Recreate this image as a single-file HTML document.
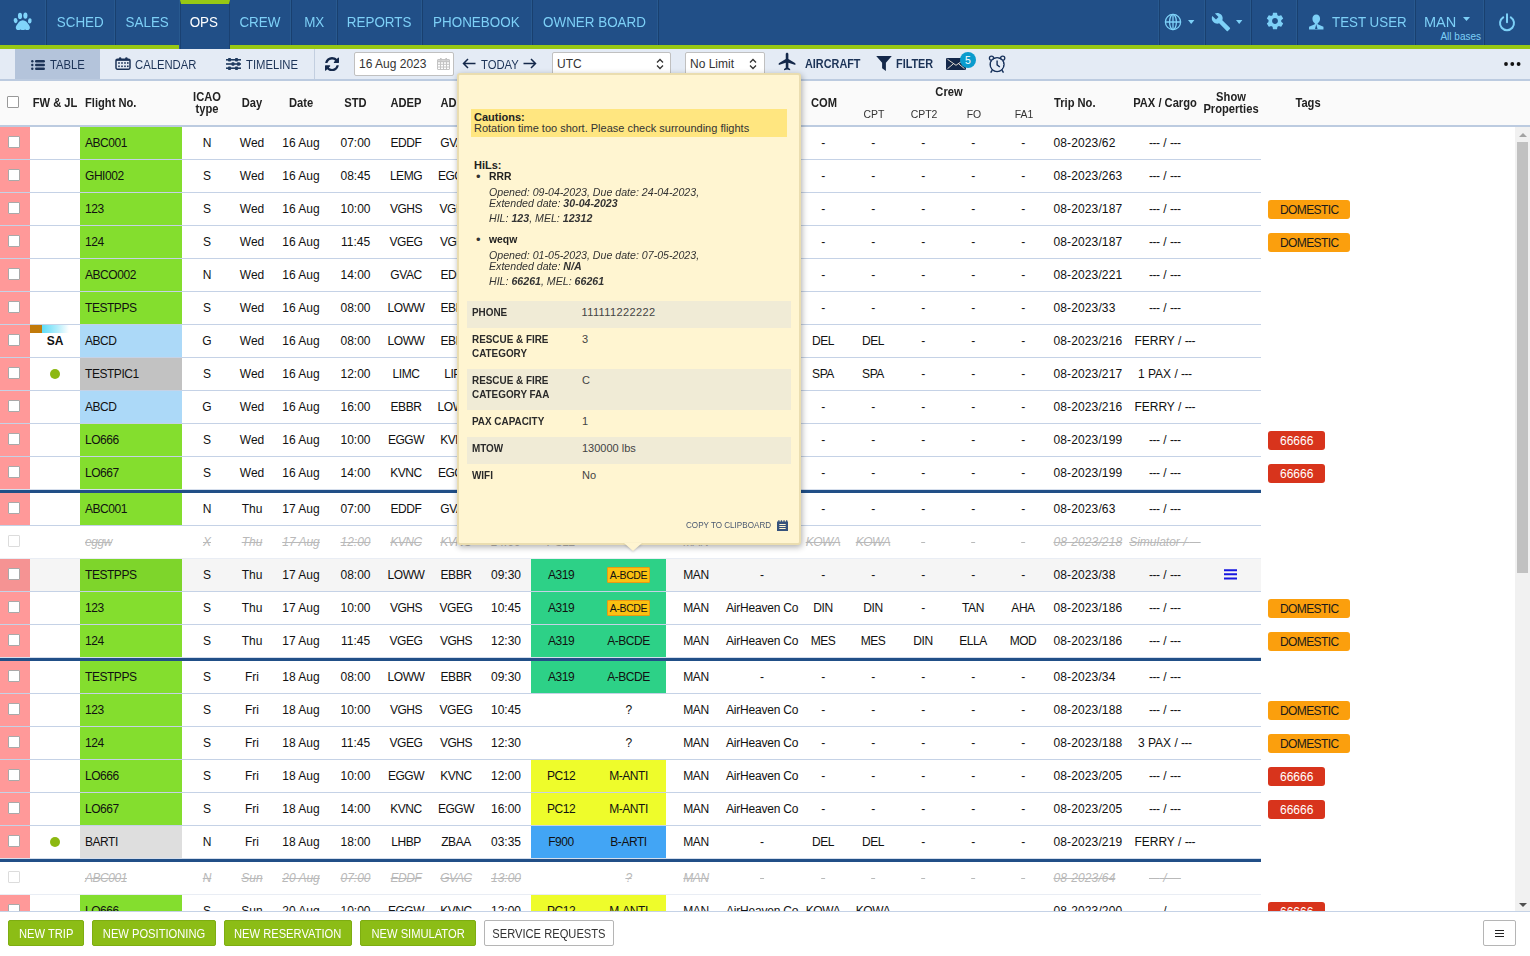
<!DOCTYPE html>
<html>
<head>
<meta charset="utf-8">
<title>OPS</title>
<style>
*{box-sizing:border-box;margin:0;padding:0}
html,body{width:1530px;height:956px;overflow:hidden;background:#fff}
body{font-family:"Liberation Sans",sans-serif;font-size:12px;color:#1a1a1a;position:relative}
i{font-style:normal}
/* ---------- NAV ---------- */
#nav{position:absolute;left:0;top:0;width:1530px;height:45px;background:#214f87}
#stripe{position:absolute;left:0;top:45px;width:1530px;height:4px;background:#97c814}
.ni{position:absolute;top:0;height:45px;border-left:1px solid #19406f;box-shadow:-1px 0 0 #28598f;color:#7dd0f7;font-size:15px;line-height:44px;text-align:center;white-space:nowrap}
.ni>b{display:inline-block;font-weight:normal;transform:scaleX(.895);transform-origin:50% 50%;position:relative;left:-.7px}
.ni.act{background:#214f87;height:49px;border-top:4px solid #97c814;color:#fff;line-height:36px;z-index:2;border-left:1px solid #1a4172;border-right:1px solid #1a4172}
/* ---------- TOOLBAR ---------- */
#tb{position:absolute;left:0;top:49px;width:1530px;height:32px;background:#e4ebf5;border-bottom:2px solid #bccbe0}
.tbi{position:absolute;top:0;height:30px;line-height:32.500px;font-size:12px;color:#1c3357;white-space:nowrap}
.tbi>span{display:inline-block;transform:scaleX(.94);transform-origin:0 50%}
.tbi svg{position:absolute}
.tbi.bb{line-height:31px}
.tbi.bb>span{transform:scaleX(.905)}
.inp{position:absolute;top:3px;height:24px;background:#fff;border:1px solid #c0c0c0;border-radius:2px;font-size:12px;line-height:22.500px;color:#333;padding-left:4px}
/* ---------- HEADER ---------- */
#th{position:absolute;left:0;top:81px;width:1530px;height:46px;background:#fafafa;border-bottom:2px solid #bccbe0}
.hc{position:absolute;font-weight:bold;font-size:12px;color:#222;white-space:nowrap;line-height:12px;text-align:center;transform:scaleX(.93);transform-origin:50% 50%}
.hc.hl{transform-origin:0 50%}
.hs{position:absolute;font-size:11px;color:#333;white-space:nowrap;text-align:center;line-height:12px;transform:scaleX(.95)}
/* ---------- BODY ---------- */
#tbody{position:absolute;left:0;top:127px;width:1515px;height:784px;overflow:hidden;background:#fff}
.r{position:absolute;left:0;width:1516px;height:33px}
.rb{position:absolute;left:0;top:0;width:1261px;height:33px;border-bottom:1px solid #c5d2e6}
.r.s .rb{height:36px;border-bottom:none}
.r.s .rb:after{content:"";position:absolute;left:0;top:32px;width:1261px;height:1px;background:#d5deec}
.r.s .rb:before{content:"";position:absolute;left:0;top:33px;width:1261px;height:3px;background:#214f87;z-index:3}
.r.h .rb{background:#f5f5f5}
.c{position:absolute;top:0;height:32px;line-height:32px;text-align:center;white-space:nowrap;font-size:12px;color:#111}
.c.l{text-align:left;padding-left:5px}
.c.u{letter-spacing:-.45px}
.c.t{padding-left:7px}
.r.x .c{color:#b9b9b9;font-style:italic;text-decoration:line-through}
.r.x .rb{border-bottom-color:#e9edf4}
.cb{display:inline-block;width:12px;height:12px;background:#fff;border:1px solid #a9a9a9;border-radius:1px;vertical-align:middle;position:relative;top:-2px;left:-1px}
.r.x .cb{border-color:#dcdcdc}
.dot{display:inline-block;width:10px;height:10px;border-radius:50%;background:#8cb811;;vertical-align:middle;position:relative;top:-1px}
.sa{font-size:12px;color:#111}
.fl1{position:absolute;left:0;top:0;width:12px;height:8px;background:#c17a0a}
.fl2{position:absolute;left:12px;top:0;width:27px;height:8px;background:linear-gradient(90deg,#5ddcf7,#b8eefb 60%,#fff)}
.bdg{display:inline-block;background:#fbc111;border:1px solid #e99a12;line-height:14px;height:16px;padding:0 2px;font-size:10.500px;letter-spacing:-.4px;border-radius:1px;vertical-align:middle;position:relative;top:-1px}
.tag{display:inline-block;height:19px;line-height:20px;border-radius:3px;font-size:12px;padding:0 12px;vertical-align:middle;position:relative;top:0px}
.tag.dom{background:#fb9f0d;color:#1a1a1a;letter-spacing:-.6px;padding-right:11px}
.tag.red{background:#d8341c;color:#fff}
.em{letter-spacing:-.5px;margin-right:.5px}
/* ---------- SCROLLBAR ---------- */
#sb{position:absolute;left:1515px;top:127px;width:15px;height:784px;background:#f1f1f1}
#sb .thumb{position:absolute;left:2px;top:15px;width:11px;height:431px;background:#c1c1c1}
/* ---------- FOOTER ---------- */
#ft{position:absolute;left:0;top:911px;width:1530px;height:45px;background:#fff;border-top:1px solid #c5d2e6}
.btn{position:absolute;top:8px;height:26px;line-height:26px;text-align:center;font-size:12px;color:#fff;background:#8cbd16;border:1px solid #7ead12;border-radius:2px;white-space:nowrap}
.btn>b{display:inline-block;font-weight:normal;transform:scaleX(.93);transform-origin:50% 50%}
.btn.w{background:#fff;color:#333;border:1px solid #b5b5b5}
/* ---------- TOOLTIP ---------- */
#tip{position:absolute;left:457px;top:73px;width:344px;height:471.5px;background:#fff5d1;box-shadow:1px 2px 6px rgba(0,0,0,.32);z-index:10;border:2px solid #eaddb0;border-radius:3px}
#tip .arrow{position:absolute;left:165px;top:468px;width:0;height:0;border-left:9.5px solid transparent;border-right:9.5px solid transparent;border-top:8px solid #fff5d1;filter:drop-shadow(0 1px 1px rgba(0,0,0,.18))}
#tip .t{position:absolute;white-space:nowrap;font-size:11px;color:#333;line-height:12px}
#tip .tr{position:absolute;left:8px;width:324px}
#tip .tr.a{background:#f0ebd6}
#tip .tl{position:absolute;left:5px;font-weight:bold;font-size:11px;color:#2a2a2a;line-height:14px;top:4px;transform:scaleX(.9);transform-origin:0 50%;white-space:nowrap}
#tip .tv{position:absolute;left:115px;font-size:11px;color:#444;line-height:14px;top:4px}
</style>
</head>
<body>

<!-- NAV -->
<div id="nav">
  <div class="ni" style="left:0;width:46px;border-left:none">
    <svg width="46" height="45" viewBox="0 0 46 45" style="position:absolute;left:0;top:0"><g fill="#80d4fa"><ellipse cx="15.600" cy="20.600" rx="1.900" ry="2.700" transform="rotate(-8 15.600 20.600)"/><ellipse cx="20" cy="15.900" rx="2.050" ry="3.150"/><ellipse cx="25.400" cy="15.600" rx="2.050" ry="3.200"/><ellipse cx="29.800" cy="20.900" rx="1.800" ry="2.600" transform="rotate(8 29.800 20.900)"/><path d="M22.800 20.200C20 20.200 18.500 22.500 17.500 24 16.300 25.500 15.800 26.500 15.800 27.800 15.800 29.300 17 30.100 18.200 30.100 19.300 30.100 19.800 29.600 20.500 29.400 21.300 29.600 21.800 30.100 22.800 30.100 23.800 30.100 24.300 29.600 25.100 29.400 25.900 29.600 26.400 30.100 27.500 30.100 28.700 30.100 29.900 29.300 29.900 27.800 29.900 26.500 29.400 25.500 28.200 24 27.200 22.500 25.600 20.200 22.800 20.200z"/></g></svg>
  </div>
  <div class="ni" style="left:46px;width:69px"><b>SCHED</b></div>
  <div class="ni" style="left:115px;width:65px"><b>SALES</b></div>
  <div class="ni act" style="left:180px;width:50px"><b>OPS</b></div>
  <div class="ni" style="left:230px;width:61px;border-left:none"><b>CREW</b></div>
  <div class="ni" style="left:291px;width:46px"><b>MX</b></div>
  <div class="ni" style="left:337px;width:85px"><b>REPORTS</b></div>
  <div class="ni" style="left:422px;width:110px"><b>PHONEBOOK</b></div>
  <div class="ni" style="left:532px;width:126px"><b>OWNER BOARD</b></div>
  <div class="ni" style="left:658px;width:1px"></div>

  <div class="ni" style="left:1159px;width:46px">
    <svg width="18" height="18" viewBox="0 0 18 18" style="position:absolute;left:3.700px;top:13.200px"><g fill="none" stroke="#7dd0f7" stroke-width="1.3"><circle cx="9" cy="9" r="7.6"/><ellipse cx="9" cy="9" rx="3.4" ry="7.6"/><path d="M1.400 9h15.200M9 1.400v15.200"/></g></svg>
    <svg width="8" height="5" viewBox="0 0 8 5" style="position:absolute;left:28px;top:20px"><path d="M0 0h6.400L3.200 4z" fill="#7dd0f7"/></svg>
  </div>
  <div class="ni" style="left:1205px;width:46px">
    <svg width="20" height="20" viewBox="0 0 24 24" style="position:absolute;left:5px;top:12px"><path fill="#7dd0f7" d="M22.700 19l-9.100-9.100c.9-2.300.4-5-1.500-6.900-2-2-5-2.400-7.400-1.300L9 6 6 9 1.600 4.700C.4 7.100.9 10.100 2.900 12.100c1.900 1.900 4.600 2.400 6.900 1.500l9.100 9.100c.4.4 1 .4 1.400 0l2.300-2.300c.5-.4.500-1.100.1-1.400z"/></svg>
    <svg width="8" height="5" viewBox="0 0 8 5" style="position:absolute;left:30px;top:20px"><path d="M0 0h6.400L3.200 4z" fill="#7dd0f7"/></svg>
  </div>
  <div class="ni" style="left:1251px;width:46px">
    <svg width="20" height="20" viewBox="0 0 24 24" style="position:absolute;left:12.500px;top:11.300px"><path fill="#7dd0f7" d="M19.430 12.980c.04-.32.070-.64.070-.98s-.03-.66-.07-.98l2.110-1.650c.19-.15.240-.42.120-.64l-2-3.460c-.12-.22-.39-.3-.61-.22l-2.490 1c-.52-.4-1.080-.73-1.690-.98l-.38-2.650A.488.488 0 0 0 14 2h-4c-.25 0-.46.180-.49.420l-.38 2.650c-.61.250-1.170.59-1.690.98l-2.490-1c-.23-.09-.49 0-.61.220l-2 3.460c-.13.220-.07.490.12.640l2.110 1.650c-.4.320-.7.650-.7.980s.3.660.7.980l-2.110 1.650c-.19.150-.24.420-.12.640l2 3.460c.12.220.39.300.61.220l2.490-1c.52.400 1.080.73 1.690.98l.38 2.650c.3.240.24.420.49.420h4c.25 0 .46-.18.490-.42l.38-2.650c.61-.25 1.170-.59 1.690-.98l2.490 1c.23.090.49 0 .61-.22l2-3.460c.12-.22.070-.49-.12-.64l-2.110-1.650zM12 15.500c-1.930 0-3.500-1.570-3.500-3.500s1.570-3.500 3.500-3.500 3.500 1.570 3.500 3.500-1.570 3.500-3.500 3.500z"/></svg>
  </div>
  <div class="ni" style="left:1297px;width:118px">
    <svg width="16.500" height="16" viewBox="0 0 16 16" preserveAspectRatio="none" style="position:absolute;left:10px;top:14.300px"><path fill="#7dd0f7" d="M8 .5c2.300 0 3.700 1.700 3.700 4.200 0 2-1 3.900-2.300 4.600v.9l5.600 2.600v2.700H1v-2.700l5.600-2.600v-.9C5.300 8.600 4.300 6.700 4.300 4.700 4.300 2.200 5.700.5 8 .5z"/><path fill="#214f87" d="M8 10.200l1.200 4.800H6.800z"/></svg>
    <span style="position:absolute;left:33.500px;top:0;transform:scaleX(.89);transform-origin:0 50%">TEST USER</span>
  </div>
  <div class="ni" style="left:1415px;width:69px">
    <span style="position:absolute;left:7.500px;top:0;transform:scaleX(.97);transform-origin:0 50%">MAN</span>
    <svg width="8" height="5" viewBox="0 0 8 5" style="position:absolute;left:47px;top:17px"><path d="M0 0h7L3.500 4z" fill="#7dd0f7"/></svg>
    <span style="position:absolute;right:3px;top:31px;font-size:10px;line-height:12px">All bases</span>
  </div>
  <div class="ni" style="left:1484px;width:46px">
    <svg width="18" height="19" viewBox="0 0 18 19" style="position:absolute;left:13px;top:13px"><g fill="none" stroke="#7dd0f7" stroke-width="2" stroke-linecap="round"><path d="M5.200 4.300A7 7 0 1 0 12.800 4.300"/><path d="M9 1.200v8"/></g></svg>
  </div>
</div>
<div id="stripe"></div>

<!-- TOOLBAR -->
<div id="tb">
  <div class="tbi" style="left:15px;width:85px;background:#b4c4db"></div>
  <div class="tbi" style="left:31px">
    <svg width="14" height="10" viewBox="0 0 14 10" style="left:-.5px;top:10.700px"><g fill="#1c3357"><circle cx="1.300" cy="1.300" r="1.200"/><circle cx="1.300" cy="5" r="1.200"/><circle cx="1.300" cy="8.700" r="1.200"/><rect x="4" y=".1" width="10" height="2.400" rx="1.200"/><rect x="4" y="3.800" width="10" height="2.400" rx="1.200"/><rect x="4" y="7.500" width="10" height="2.400" rx="1.200"/></g></svg>
    <span style="margin-left:19px">TABLE</span>
  </div>
  <div class="tbi" style="left:115px">
    <svg width="16" height="13" viewBox="0 0 16 13" style="left:-.5px;top:7.700px"><rect x="1" y="2.200" width="14" height="10" rx="1.400" fill="none" stroke="#1c3357" stroke-width="1.500"/><path d="M1 3h14" stroke="#1c3357" stroke-width="1.800"/><g fill="#1c3357"><circle cx="5.100" cy="1.400" r="1.250"/><circle cx="11.400" cy="1.400" r="1.250"/><rect x="3.200" y="5.200" width="1.600" height="1.600"/><rect x="6.200" y="5.200" width="1.600" height="1.600"/><rect x="9.200" y="5.200" width="1.600" height="1.600"/><rect x="12" y="5.200" width="1.600" height="1.600"/><rect x="3.200" y="8.500" width="1.600" height="1.600"/><rect x="6.200" y="8.500" width="1.600" height="1.600"/><rect x="9.200" y="8.500" width="1.600" height="1.600"/><rect x="12" y="8.500" width="1.600" height="1.600"/></g></svg>
    <span style="margin-left:20px">CALENDAR</span>
  </div>
  <div class="tbi" style="left:226px">
    <svg width="15" height="12" viewBox="0 0 15 12" style="left:0;top:9px"><g fill="#1f3a5f"><rect x="0" y="1" width="15" height="1.600"/><rect x="0" y="5.200" width="15" height="1.600"/><rect x="0" y="9.400" width="15" height="1.600"/><rect x="2" y="0" width="3" height="3.600" rx=".8"/><rect x="9" y="0" width="3" height="3.600" rx=".8"/><rect x="5.500" y="4.200" width="3" height="3.600" rx=".8"/><rect x="11" y="4.200" width="3" height="3.600" rx=".8"/><rect x="2" y="8.400" width="3" height="3.600" rx=".8"/><rect x="9" y="8.400" width="3" height="3.600" rx=".8"/></g></svg>
    <span style="margin-left:20px">TIMELINE</span>
  </div>
  <div style="position:absolute;left:314px;top:0;width:1px;height:30px;background:#c3cfe0"></div>
  <div class="tbi" style="left:324px">
    <svg width="14" height="14.300" viewBox="0 0 1536 1536" preserveAspectRatio="none" style="left:.7px;top:7.700px"><path fill="#14284a" d="M1511 928q0 5-1 7-64 268-268 434.500T764 1536q-146 0-282.500-55T238 1324l-129 129q-19 19-45 19t-45-19-19-45V960q0-26 19-45t45-19h448q26 0 45 19t19 45-19 45l-137 137q71 66 161 102t187 36q134 0 250-65t186-179q11-17 53-117 8-23 30-23h192q13 0 22.500 9.500t9.500 22.500zm25-800v448q0 26-19 45t-45 19h-448q-26 0-45-19t-19-45 19-45l138-138Q969 256 768 256q-134 0-250 65T332 500q-11 17-53 117-8 23-30 23H50q-13 0-22.500-9.500T18 608v-7q65-268 270-434.500T768 0q146 0 284 55.500T1297 212l130-129q19-19 45-19t45 19 19 45z"/></svg>
  </div>
  <div class="inp" style="left:354px;width:100px">16 Aug 2023
    <svg width="13" height="12" viewBox="0 0 13 12" style="position:absolute;left:81.500px;top:5.300px"><g fill="none" stroke="#c4c4c4" stroke-width="1"><rect x=".5" y="1.500" width="12" height="10" rx=".5"/><path d="M.5 3.300h12" stroke-width="2"/><path d="M3.800 0v2.500M9.200 0v2.500" stroke-width="1.600"/><path d="M.5 6.300h12M.5 9h12M3.500 4v7.500M6.500 4v7.500M9.500 4v7.500"/></g></svg>
  </div>
  <div class="tbi" style="left:462px">
    <svg width="14" height="11" viewBox="0 0 14 11" style="left:0;top:9px"><path d="M13.500 5.500H1.500M6 1L1.500 5.500 6 10" fill="none" stroke="#14284a" stroke-width="1.500"/></svg>
    <span style="margin-left:19px">TODAY</span>
    <svg width="14" height="11" viewBox="0 0 14 11" style="left:61px;top:9px"><path d="M.5 5.500h12M8 1l4.500 4.500L8 10" fill="none" stroke="#14284a" stroke-width="1.500"/></svg>
  </div>
  <div class="inp" style="left:552px;width:119px">UTC
    <svg width="8" height="12" viewBox="0 0 8 12" style="position:absolute;left:103px;top:5px"><path d="M1 4.500L4 1.500 7 4.500M1 7.500L4 10.500 7 7.500" fill="none" stroke="#333" stroke-width="1.300"/></svg>
  </div>
  <div class="inp" style="left:685px;width:80px">No Limit
    <svg width="8" height="12" viewBox="0 0 8 12" style="position:absolute;left:63px;top:5px"><path d="M1 4.500L4 1.500 7 4.500M1 7.500L4 10.500 7 7.500" fill="none" stroke="#333" stroke-width="1.300"/></svg>
  </div>
  <div class="tbi bb" style="left:778px;font-weight:bold">
    <svg width="21" height="21" viewBox="0 0 24 24" style="left:-1.500px;top:2.400px"><path fill="#14284a" d="M21 16v-2l-8-5V3.500c0-.83-.67-1.500-1.500-1.500S10 2.670 10 3.500V9l-8 5v2l8-2.500V19l-2 1.500V22l3.500-1 3.500 1v-1.500L13 19v-5.500l8 2.500z"/></svg>
    <span style="margin-left:27px">AIRCRAFT</span>
  </div>
  <div class="tbi bb" style="left:876px;font-weight:bold">
    <svg width="16" height="15" viewBox="0 0 16 15" style="left:0;top:7px"><path fill="#14284a" d="M.2 0h15.600L9.900 6.800V15L6.100 12.300V6.800z"/></svg>
    <span style="margin-left:20px">FILTER</span>
  </div>
  <div class="tbi" style="left:946px">
    <svg width="20" height="12" viewBox="0 0 20 12" style="left:0;top:9.300px"><rect x="0" y="0" width="20" height="12" rx="1.300" fill="#14284a"/><path d="M1.500 1.300L10 7.300l8.500-6M1.500 10.700L7.500 5.700M18.500 10.700L12.500 5.700" fill="none" stroke="#efe9dc" stroke-width=".9"/></svg>
    <span style="position:absolute;left:14px;top:3px;width:16px;height:16px;border-radius:50%;background:#0a9bcd;color:#fff;font-size:10.500px;line-height:16px;text-align:center;transform:none">5</span>
  </div>
  <div class="tbi" style="left:988px">
    <svg width="18" height="19" viewBox="0 0 18 19" style="left:0;top:6px"><g fill="none" stroke="#16305a" stroke-width="1.500"><circle cx="9.100" cy="9.600" r="6.900"/><path d="M9.100 5.400v4.500l2.700 2.100" stroke-width="1.400"/><circle cx="3.500" cy="3.300" r="2.100" stroke-width="1.300"/><circle cx="14.700" cy="3.300" r="2.100" stroke-width="1.300"/><path d="M4.300 15.200L2.700 17.600M13.900 15.200l1.600 2.400" stroke-width="1.500"/></g><circle cx="9.100" cy="9.600" r="6.150" fill="#e4ebf5"/><path d="M9.100 5.400v4.500l2.700 2.100" stroke="#16305a" stroke-width="1.400" fill="none"/></svg>
  </div>
  <div class="tbi" style="left:1504px">
    <svg width="17" height="4" viewBox="0 0 17 4" style="left:0;top:13px"><g fill="#111"><circle cx="2" cy="2" r="1.900"/><circle cx="8.300" cy="2" r="1.900"/><circle cx="14.600" cy="2" r="1.900"/></g></svg>
  </div>
</div>

<!-- HEADER -->
<div id="th">
  <i class="cb" style="position:absolute;left:7px;top:15px;border-color:#999"></i>
  <div class="hc" style="left:30px;width:50px;top:15.500px">FW &amp; JL</div>
  <div class="hc hl" style="left:85px;top:15.500px;text-align:left">Flight No.</div>
  <div class="hc" style="left:182px;width:50px;top:9.500px">ICAO<br>type</div>
  <div class="hc" style="left:232px;width:40px;top:15.500px">Day</div>
  <div class="hc" style="left:272px;width:58px;top:15.500px">Date</div>
  <div class="hc" style="left:330px;width:51px;top:15.500px">STD</div>
  <div class="hc" style="left:381px;width:50px;top:15.500px">ADEP</div>
  <div class="hc" style="left:431px;width:50px;top:15.500px">ADES</div>
  <div class="hc" style="left:799px;width:50px;top:15.500px">COM</div>
  <div class="hc" style="left:849px;width:200px;top:5px">Crew</div>
  <div class="hs" style="left:849px;width:50px;top:27px">CPT</div>
  <div class="hs" style="left:899px;width:50px;top:27px">CPT2</div>
  <div class="hs" style="left:949px;width:50px;top:27px">FO</div>
  <div class="hs" style="left:999px;width:50px;top:27px">FA1</div>
  <div class="hc hl" style="left:1054px;top:15.500px;text-align:left">Trip No.</div>
  <div class="hc" style="left:1128px;width:74px;top:15.500px">PAX / Cargo</div>
  <div class="hc" style="left:1196px;width:70px;top:9.500px">Show<br>Properties</div>
  <div class="hc" style="left:1268px;width:80px;top:15.500px">Tags</div>
</div>

<!-- TABLE BODY -->
<div id="tbody">
<div class="r" style="top:0px"><div class="rb"><div class="c " style="left:0px;width:30px;background:#ff9999;"><i class="cb"></i></div><div class="c " style="left:30px;width:50px;"></div><div class="c l u" style="left:80px;width:102px;background:#84de2e;">ABC001</div><div class="c " style="left:182px;width:50px;">N</div><div class="c " style="left:232px;width:40px;">Wed</div><div class="c " style="left:272px;width:58px;">16 Aug</div><div class="c " style="left:330px;width:51px;">07:00</div><div class="c u" style="left:381px;width:50px;">EDDF</div><div class="c u" style="left:431px;width:50px;">GVAC</div><div class="c " style="left:481px;width:50px;">13:00</div><div class="c u" style="left:531px;width:60px;"></div><div class="c u" style="left:591px;width:75px;">?</div><div class="c u" style="left:666px;width:60px;">MAN</div><div class="c " style="left:726px;width:72px;letter-spacing:-.2px">-</div><div class="c u" style="left:798px;width:50px;">-</div><div class="c u" style="left:848px;width:50px;">-</div><div class="c u" style="left:898px;width:50px;">-</div><div class="c u" style="left:948px;width:50px;">-</div><div class="c u" style="left:998px;width:50px;">-</div><div class="c l" style="left:1048px;width:80px;padding-left:5.5px;letter-spacing:.12px">08-2023/62</div><div class="c " style="left:1128px;width:74px;"><span class="em">---</span> / <span class="em">---</span></div><div class="c " style="left:1202px;width:59px;"></div></div><div class="c l t" style="left:1261px;width:255px;"></div></div>
<div class="r" style="top:33px"><div class="rb"><div class="c " style="left:0px;width:30px;background:#ff9999;"><i class="cb"></i></div><div class="c " style="left:30px;width:50px;"></div><div class="c l u" style="left:80px;width:102px;background:#84de2e;">GHI002</div><div class="c " style="left:182px;width:50px;">S</div><div class="c " style="left:232px;width:40px;">Wed</div><div class="c " style="left:272px;width:58px;">16 Aug</div><div class="c " style="left:330px;width:51px;">08:45</div><div class="c u" style="left:381px;width:50px;">LEMG</div><div class="c u" style="left:431px;width:50px;">EGGW</div><div class="c " style="left:481px;width:50px;">11:00</div><div class="c u" style="left:531px;width:60px;"></div><div class="c u" style="left:591px;width:75px;">?</div><div class="c u" style="left:666px;width:60px;">MAN</div><div class="c " style="left:726px;width:72px;letter-spacing:-.2px">-</div><div class="c u" style="left:798px;width:50px;">-</div><div class="c u" style="left:848px;width:50px;">-</div><div class="c u" style="left:898px;width:50px;">-</div><div class="c u" style="left:948px;width:50px;">-</div><div class="c u" style="left:998px;width:50px;">-</div><div class="c l" style="left:1048px;width:80px;padding-left:5.5px;letter-spacing:.12px">08-2023/263</div><div class="c " style="left:1128px;width:74px;"><span class="em">---</span> / <span class="em">---</span></div><div class="c " style="left:1202px;width:59px;"></div></div><div class="c l t" style="left:1261px;width:255px;"></div></div>
<div class="r" style="top:66px"><div class="rb"><div class="c " style="left:0px;width:30px;background:#ff9999;"><i class="cb"></i></div><div class="c " style="left:30px;width:50px;"></div><div class="c l u" style="left:80px;width:102px;background:#84de2e;">123</div><div class="c " style="left:182px;width:50px;">S</div><div class="c " style="left:232px;width:40px;">Wed</div><div class="c " style="left:272px;width:58px;">16 Aug</div><div class="c " style="left:330px;width:51px;">10:00</div><div class="c u" style="left:381px;width:50px;">VGHS</div><div class="c u" style="left:431px;width:50px;">VGEG</div><div class="c " style="left:481px;width:50px;">10:45</div><div class="c u" style="left:531px;width:60px;"></div><div class="c u" style="left:591px;width:75px;">?</div><div class="c u" style="left:666px;width:60px;">MAN</div><div class="c " style="left:726px;width:72px;letter-spacing:-.2px">-</div><div class="c u" style="left:798px;width:50px;">-</div><div class="c u" style="left:848px;width:50px;">-</div><div class="c u" style="left:898px;width:50px;">-</div><div class="c u" style="left:948px;width:50px;">-</div><div class="c u" style="left:998px;width:50px;">-</div><div class="c l" style="left:1048px;width:80px;padding-left:5.5px;letter-spacing:.12px">08-2023/187</div><div class="c " style="left:1128px;width:74px;"><span class="em">---</span> / <span class="em">---</span></div><div class="c " style="left:1202px;width:59px;"></div></div><div class="c l t" style="left:1261px;width:255px;"><span class="tag dom">DOMESTIC</span></div></div>
<div class="r" style="top:99px"><div class="rb"><div class="c " style="left:0px;width:30px;background:#ff9999;"><i class="cb"></i></div><div class="c " style="left:30px;width:50px;"></div><div class="c l u" style="left:80px;width:102px;background:#84de2e;">124</div><div class="c " style="left:182px;width:50px;">S</div><div class="c " style="left:232px;width:40px;">Wed</div><div class="c " style="left:272px;width:58px;">16 Aug</div><div class="c " style="left:330px;width:51px;">11:45</div><div class="c u" style="left:381px;width:50px;">VGEG</div><div class="c u" style="left:431px;width:50px;">VGHS</div><div class="c " style="left:481px;width:50px;">12:30</div><div class="c u" style="left:531px;width:60px;"></div><div class="c u" style="left:591px;width:75px;">?</div><div class="c u" style="left:666px;width:60px;">MAN</div><div class="c " style="left:726px;width:72px;letter-spacing:-.2px">-</div><div class="c u" style="left:798px;width:50px;">-</div><div class="c u" style="left:848px;width:50px;">-</div><div class="c u" style="left:898px;width:50px;">-</div><div class="c u" style="left:948px;width:50px;">-</div><div class="c u" style="left:998px;width:50px;">-</div><div class="c l" style="left:1048px;width:80px;padding-left:5.5px;letter-spacing:.12px">08-2023/187</div><div class="c " style="left:1128px;width:74px;"><span class="em">---</span> / <span class="em">---</span></div><div class="c " style="left:1202px;width:59px;"></div></div><div class="c l t" style="left:1261px;width:255px;"><span class="tag dom">DOMESTIC</span></div></div>
<div class="r" style="top:132px"><div class="rb"><div class="c " style="left:0px;width:30px;background:#ff9999;"><i class="cb"></i></div><div class="c " style="left:30px;width:50px;"></div><div class="c l u" style="left:80px;width:102px;background:#84de2e;">ABCO002</div><div class="c " style="left:182px;width:50px;">N</div><div class="c " style="left:232px;width:40px;">Wed</div><div class="c " style="left:272px;width:58px;">16 Aug</div><div class="c " style="left:330px;width:51px;">14:00</div><div class="c u" style="left:381px;width:50px;">GVAC</div><div class="c u" style="left:431px;width:50px;">EDDF</div><div class="c " style="left:481px;width:50px;">20:00</div><div class="c u" style="left:531px;width:60px;"></div><div class="c u" style="left:591px;width:75px;">?</div><div class="c u" style="left:666px;width:60px;">MAN</div><div class="c " style="left:726px;width:72px;letter-spacing:-.2px">-</div><div class="c u" style="left:798px;width:50px;">-</div><div class="c u" style="left:848px;width:50px;">-</div><div class="c u" style="left:898px;width:50px;">-</div><div class="c u" style="left:948px;width:50px;">-</div><div class="c u" style="left:998px;width:50px;">-</div><div class="c l" style="left:1048px;width:80px;padding-left:5.5px;letter-spacing:.12px">08-2023/221</div><div class="c " style="left:1128px;width:74px;"><span class="em">---</span> / <span class="em">---</span></div><div class="c " style="left:1202px;width:59px;"></div></div><div class="c l t" style="left:1261px;width:255px;"></div></div>
<div class="r" style="top:165px"><div class="rb"><div class="c " style="left:0px;width:30px;background:#ff9999;"><i class="cb"></i></div><div class="c " style="left:30px;width:50px;"></div><div class="c l u" style="left:80px;width:102px;background:#84de2e;">TESTPPS</div><div class="c " style="left:182px;width:50px;">S</div><div class="c " style="left:232px;width:40px;">Wed</div><div class="c " style="left:272px;width:58px;">16 Aug</div><div class="c " style="left:330px;width:51px;">08:00</div><div class="c u" style="left:381px;width:50px;">LOWW</div><div class="c u" style="left:431px;width:50px;">EBBR</div><div class="c " style="left:481px;width:50px;">09:30</div><div class="c u" style="left:531px;width:60px;"></div><div class="c u" style="left:591px;width:75px;">?</div><div class="c u" style="left:666px;width:60px;">MAN</div><div class="c " style="left:726px;width:72px;letter-spacing:-.2px">-</div><div class="c u" style="left:798px;width:50px;">-</div><div class="c u" style="left:848px;width:50px;">-</div><div class="c u" style="left:898px;width:50px;">-</div><div class="c u" style="left:948px;width:50px;">-</div><div class="c u" style="left:998px;width:50px;">-</div><div class="c l" style="left:1048px;width:80px;padding-left:5.5px;letter-spacing:.12px">08-2023/33</div><div class="c " style="left:1128px;width:74px;"><span class="em">---</span> / <span class="em">---</span></div><div class="c " style="left:1202px;width:59px;"></div></div><div class="c l t" style="left:1261px;width:255px;"></div></div>
<div class="r" style="top:198px"><div class="rb"><div class="c " style="left:0px;width:30px;background:#ff9999;"><i class="cb"></i></div><div class="c " style="left:30px;width:50px;"><span class="fl1"></span><span class="fl2"></span><b class="sa">SA</b></div><div class="c l u" style="left:80px;width:102px;background:#acd9f8;">ABCD</div><div class="c " style="left:182px;width:50px;">G</div><div class="c " style="left:232px;width:40px;">Wed</div><div class="c " style="left:272px;width:58px;">16 Aug</div><div class="c " style="left:330px;width:51px;">08:00</div><div class="c u" style="left:381px;width:50px;">LOWW</div><div class="c u" style="left:431px;width:50px;">EBBR</div><div class="c " style="left:481px;width:50px;">09:30</div><div class="c u" style="left:531px;width:60px;"></div><div class="c u" style="left:591px;width:75px;">?</div><div class="c u" style="left:666px;width:60px;">MAN</div><div class="c " style="left:726px;width:72px;letter-spacing:-.2px">-</div><div class="c u" style="left:798px;width:50px;">DEL</div><div class="c u" style="left:848px;width:50px;">DEL</div><div class="c u" style="left:898px;width:50px;">-</div><div class="c u" style="left:948px;width:50px;">-</div><div class="c u" style="left:998px;width:50px;">-</div><div class="c l" style="left:1048px;width:80px;padding-left:5.5px;letter-spacing:.12px">08-2023/216</div><div class="c " style="left:1128px;width:74px;">FERRY / <span class="em">---</span></div><div class="c " style="left:1202px;width:59px;"></div></div><div class="c l t" style="left:1261px;width:255px;"></div></div>
<div class="r" style="top:231px"><div class="rb"><div class="c " style="left:0px;width:30px;background:#ff9999;"><i class="cb"></i></div><div class="c " style="left:30px;width:50px;"><i class="dot"></i></div><div class="c l u" style="left:80px;width:102px;background:#c2c2c2;">TESTPIC1</div><div class="c " style="left:182px;width:50px;">S</div><div class="c " style="left:232px;width:40px;">Wed</div><div class="c " style="left:272px;width:58px;">16 Aug</div><div class="c " style="left:330px;width:51px;">12:00</div><div class="c u" style="left:381px;width:50px;">LIMC</div><div class="c u" style="left:431px;width:50px;">LIPZ</div><div class="c " style="left:481px;width:50px;">13:00</div><div class="c u" style="left:531px;width:60px;"></div><div class="c u" style="left:591px;width:75px;">?</div><div class="c u" style="left:666px;width:60px;">MAN</div><div class="c " style="left:726px;width:72px;letter-spacing:-.2px">-</div><div class="c u" style="left:798px;width:50px;">SPA</div><div class="c u" style="left:848px;width:50px;">SPA</div><div class="c u" style="left:898px;width:50px;">-</div><div class="c u" style="left:948px;width:50px;">-</div><div class="c u" style="left:998px;width:50px;">-</div><div class="c l" style="left:1048px;width:80px;padding-left:5.5px;letter-spacing:.12px">08-2023/217</div><div class="c " style="left:1128px;width:74px;">1 PAX / <span class="em">---</span></div><div class="c " style="left:1202px;width:59px;"></div></div><div class="c l t" style="left:1261px;width:255px;"></div></div>
<div class="r" style="top:264px"><div class="rb"><div class="c " style="left:0px;width:30px;background:#ff9999;"><i class="cb"></i></div><div class="c " style="left:30px;width:50px;"></div><div class="c l u" style="left:80px;width:102px;background:#acd9f8;">ABCD</div><div class="c " style="left:182px;width:50px;">G</div><div class="c " style="left:232px;width:40px;">Wed</div><div class="c " style="left:272px;width:58px;">16 Aug</div><div class="c " style="left:330px;width:51px;">16:00</div><div class="c u" style="left:381px;width:50px;">EBBR</div><div class="c u" style="left:431px;width:50px;">LOWW</div><div class="c " style="left:481px;width:50px;">17:30</div><div class="c u" style="left:531px;width:60px;"></div><div class="c u" style="left:591px;width:75px;">?</div><div class="c u" style="left:666px;width:60px;">MAN</div><div class="c " style="left:726px;width:72px;letter-spacing:-.2px">-</div><div class="c u" style="left:798px;width:50px;">-</div><div class="c u" style="left:848px;width:50px;">-</div><div class="c u" style="left:898px;width:50px;">-</div><div class="c u" style="left:948px;width:50px;">-</div><div class="c u" style="left:998px;width:50px;">-</div><div class="c l" style="left:1048px;width:80px;padding-left:5.5px;letter-spacing:.12px">08-2023/216</div><div class="c " style="left:1128px;width:74px;">FERRY / <span class="em">---</span></div><div class="c " style="left:1202px;width:59px;"></div></div><div class="c l t" style="left:1261px;width:255px;"></div></div>
<div class="r" style="top:297px"><div class="rb"><div class="c " style="left:0px;width:30px;background:#ff9999;"><i class="cb"></i></div><div class="c " style="left:30px;width:50px;"></div><div class="c l u" style="left:80px;width:102px;background:#84de2e;">LO666</div><div class="c " style="left:182px;width:50px;">S</div><div class="c " style="left:232px;width:40px;">Wed</div><div class="c " style="left:272px;width:58px;">16 Aug</div><div class="c " style="left:330px;width:51px;">10:00</div><div class="c u" style="left:381px;width:50px;">EGGW</div><div class="c u" style="left:431px;width:50px;">KVNC</div><div class="c " style="left:481px;width:50px;">12:00</div><div class="c u" style="left:531px;width:60px;"></div><div class="c u" style="left:591px;width:75px;">?</div><div class="c u" style="left:666px;width:60px;">MAN</div><div class="c " style="left:726px;width:72px;letter-spacing:-.2px">-</div><div class="c u" style="left:798px;width:50px;">-</div><div class="c u" style="left:848px;width:50px;">-</div><div class="c u" style="left:898px;width:50px;">-</div><div class="c u" style="left:948px;width:50px;">-</div><div class="c u" style="left:998px;width:50px;">-</div><div class="c l" style="left:1048px;width:80px;padding-left:5.5px;letter-spacing:.12px">08-2023/199</div><div class="c " style="left:1128px;width:74px;"><span class="em">---</span> / <span class="em">---</span></div><div class="c " style="left:1202px;width:59px;"></div></div><div class="c l t" style="left:1261px;width:255px;"><span class="tag red">66666</span></div></div>
<div class="r s" style="top:330px"><div class="rb"><div class="c " style="left:0px;width:30px;background:#ff9999;"><i class="cb"></i></div><div class="c " style="left:30px;width:50px;"></div><div class="c l u" style="left:80px;width:102px;background:#84de2e;">LO667</div><div class="c " style="left:182px;width:50px;">S</div><div class="c " style="left:232px;width:40px;">Wed</div><div class="c " style="left:272px;width:58px;">16 Aug</div><div class="c " style="left:330px;width:51px;">14:00</div><div class="c u" style="left:381px;width:50px;">KVNC</div><div class="c u" style="left:431px;width:50px;">EGGW</div><div class="c " style="left:481px;width:50px;">16:00</div><div class="c u" style="left:531px;width:60px;"></div><div class="c u" style="left:591px;width:75px;">?</div><div class="c u" style="left:666px;width:60px;">MAN</div><div class="c " style="left:726px;width:72px;letter-spacing:-.2px">-</div><div class="c u" style="left:798px;width:50px;">-</div><div class="c u" style="left:848px;width:50px;">-</div><div class="c u" style="left:898px;width:50px;">-</div><div class="c u" style="left:948px;width:50px;">-</div><div class="c u" style="left:998px;width:50px;">-</div><div class="c l" style="left:1048px;width:80px;padding-left:5.5px;letter-spacing:.12px">08-2023/199</div><div class="c " style="left:1128px;width:74px;"><span class="em">---</span> / <span class="em">---</span></div><div class="c " style="left:1202px;width:59px;"></div></div><div class="c l t" style="left:1261px;width:255px;"><span class="tag red">66666</span></div></div>
<div class="r" style="top:366px"><div class="rb"><div class="c " style="left:0px;width:30px;background:#ff9999;"><i class="cb"></i></div><div class="c " style="left:30px;width:50px;"></div><div class="c l u" style="left:80px;width:102px;background:#84de2e;">ABC001</div><div class="c " style="left:182px;width:50px;">N</div><div class="c " style="left:232px;width:40px;">Thu</div><div class="c " style="left:272px;width:58px;">17 Aug</div><div class="c " style="left:330px;width:51px;">07:00</div><div class="c u" style="left:381px;width:50px;">EDDF</div><div class="c u" style="left:431px;width:50px;">GVAC</div><div class="c " style="left:481px;width:50px;">13:00</div><div class="c u" style="left:531px;width:60px;"></div><div class="c u" style="left:591px;width:75px;">?</div><div class="c u" style="left:666px;width:60px;">MAN</div><div class="c " style="left:726px;width:72px;letter-spacing:-.2px">-</div><div class="c u" style="left:798px;width:50px;">-</div><div class="c u" style="left:848px;width:50px;">-</div><div class="c u" style="left:898px;width:50px;">-</div><div class="c u" style="left:948px;width:50px;">-</div><div class="c u" style="left:998px;width:50px;">-</div><div class="c l" style="left:1048px;width:80px;padding-left:5.5px;letter-spacing:.12px">08-2023/63</div><div class="c " style="left:1128px;width:74px;"><span class="em">---</span> / <span class="em">---</span></div><div class="c " style="left:1202px;width:59px;"></div></div><div class="c l t" style="left:1261px;width:255px;"></div></div>
<div class="r x" style="top:399px"><div class="rb"><div class="c " style="left:0px;width:30px;"><i class="cb"></i></div><div class="c " style="left:30px;width:50px;"></div><div class="c l u" style="left:80px;width:102px;">eggw</div><div class="c " style="left:182px;width:50px;">X</div><div class="c " style="left:232px;width:40px;">Thu</div><div class="c " style="left:272px;width:58px;">17 Aug</div><div class="c " style="left:330px;width:51px;">12:00</div><div class="c u" style="left:381px;width:50px;">KVNC</div><div class="c u" style="left:431px;width:50px;">KVNC</div><div class="c " style="left:481px;width:50px;">14:00</div><div class="c u" style="left:531px;width:60px;">PC12</div><div class="c u" style="left:591px;width:75px;"></div><div class="c u" style="left:666px;width:60px;">MAN</div><div class="c " style="left:726px;width:72px;letter-spacing:-.2px">-</div><div class="c u" style="left:798px;width:50px;">KOWA</div><div class="c u" style="left:848px;width:50px;">KOWA</div><div class="c u" style="left:898px;width:50px;">-</div><div class="c u" style="left:948px;width:50px;">-</div><div class="c u" style="left:998px;width:50px;">-</div><div class="c l" style="left:1048px;width:80px;padding-left:5.5px;letter-spacing:.12px">08-2023/218</div><div class="c " style="left:1128px;width:74px;">Simulator / <span class="em">---</span></div><div class="c " style="left:1202px;width:59px;"></div></div><div class="c l t" style="left:1261px;width:255px;"></div></div>
<div class="r h" style="top:432px"><div class="rb"><div class="c " style="left:0px;width:30px;background:#f59393;"><i class="cb"></i></div><div class="c " style="left:30px;width:50px;"></div><div class="c l u" style="left:80px;width:102px;background:#7ed52b;">TESTPPS</div><div class="c " style="left:182px;width:50px;">S</div><div class="c " style="left:232px;width:40px;">Thu</div><div class="c " style="left:272px;width:58px;">17 Aug</div><div class="c " style="left:330px;width:51px;">08:00</div><div class="c u" style="left:381px;width:50px;">LOWW</div><div class="c u" style="left:431px;width:50px;">EBBR</div><div class="c " style="left:481px;width:50px;">09:30</div><div class="c u" style="left:531px;width:60px;background:#2dd187;">A319</div><div class="c u" style="left:591px;width:75px;background:#2dd187;"><span class="bdg">A-BCDE</span></div><div class="c u" style="left:666px;width:60px;">MAN</div><div class="c " style="left:726px;width:72px;letter-spacing:-.2px">-</div><div class="c u" style="left:798px;width:50px;">-</div><div class="c u" style="left:848px;width:50px;">-</div><div class="c u" style="left:898px;width:50px;">-</div><div class="c u" style="left:948px;width:50px;">-</div><div class="c u" style="left:998px;width:50px;">-</div><div class="c l" style="left:1048px;width:80px;padding-left:5.5px;letter-spacing:.12px">08-2023/38</div><div class="c " style="left:1128px;width:74px;"><span class="em">---</span> / <span class="em">---</span></div><div class="c " style="left:1202px;width:59px;"><svg width="13" height="11" viewBox="0 0 13 11" style="vertical-align:middle;position:relative;left:-1px;top:-1px"><path d="M0 1.2h13M0 5.3h13M0 9.4h13" stroke="#1717e0" stroke-width="2"/></svg></div></div><div class="c l t" style="left:1261px;width:255px;"></div></div>
<div class="r" style="top:465px"><div class="rb"><div class="c " style="left:0px;width:30px;background:#ff9999;"><i class="cb"></i></div><div class="c " style="left:30px;width:50px;"></div><div class="c l u" style="left:80px;width:102px;background:#84de2e;">123</div><div class="c " style="left:182px;width:50px;">S</div><div class="c " style="left:232px;width:40px;">Thu</div><div class="c " style="left:272px;width:58px;">17 Aug</div><div class="c " style="left:330px;width:51px;">10:00</div><div class="c u" style="left:381px;width:50px;">VGHS</div><div class="c u" style="left:431px;width:50px;">VGEG</div><div class="c " style="left:481px;width:50px;">10:45</div><div class="c u" style="left:531px;width:60px;background:#2dd187;">A319</div><div class="c u" style="left:591px;width:75px;background:#2dd187;"><span class="bdg">A-BCDE</span></div><div class="c u" style="left:666px;width:60px;">MAN</div><div class="c " style="left:726px;width:72px;letter-spacing:-.2px">AirHeaven Co</div><div class="c u" style="left:798px;width:50px;">DIN</div><div class="c u" style="left:848px;width:50px;">DIN</div><div class="c u" style="left:898px;width:50px;">-</div><div class="c u" style="left:948px;width:50px;">TAN</div><div class="c u" style="left:998px;width:50px;">AHA</div><div class="c l" style="left:1048px;width:80px;padding-left:5.5px;letter-spacing:.12px">08-2023/186</div><div class="c " style="left:1128px;width:74px;"><span class="em">---</span> / <span class="em">---</span></div><div class="c " style="left:1202px;width:59px;"></div></div><div class="c l t" style="left:1261px;width:255px;"><span class="tag dom">DOMESTIC</span></div></div>
<div class="r s" style="top:498px"><div class="rb"><div class="c " style="left:0px;width:30px;background:#ff9999;"><i class="cb"></i></div><div class="c " style="left:30px;width:50px;"></div><div class="c l u" style="left:80px;width:102px;background:#84de2e;">124</div><div class="c " style="left:182px;width:50px;">S</div><div class="c " style="left:232px;width:40px;">Thu</div><div class="c " style="left:272px;width:58px;">17 Aug</div><div class="c " style="left:330px;width:51px;">11:45</div><div class="c u" style="left:381px;width:50px;">VGEG</div><div class="c u" style="left:431px;width:50px;">VGHS</div><div class="c " style="left:481px;width:50px;">12:30</div><div class="c u" style="left:531px;width:60px;background:#2dd187;">A319</div><div class="c u" style="left:591px;width:75px;background:#2dd187;">A-BCDE</div><div class="c u" style="left:666px;width:60px;">MAN</div><div class="c " style="left:726px;width:72px;letter-spacing:-.2px">AirHeaven Co</div><div class="c u" style="left:798px;width:50px;">MES</div><div class="c u" style="left:848px;width:50px;">MES</div><div class="c u" style="left:898px;width:50px;">DIN</div><div class="c u" style="left:948px;width:50px;">ELLA</div><div class="c u" style="left:998px;width:50px;">MOD</div><div class="c l" style="left:1048px;width:80px;padding-left:5.5px;letter-spacing:.12px">08-2023/186</div><div class="c " style="left:1128px;width:74px;"><span class="em">---</span> / <span class="em">---</span></div><div class="c " style="left:1202px;width:59px;"></div></div><div class="c l t" style="left:1261px;width:255px;"><span class="tag dom">DOMESTIC</span></div></div>
<div class="r" style="top:534px"><div class="rb"><div class="c " style="left:0px;width:30px;background:#ff9999;"><i class="cb"></i></div><div class="c " style="left:30px;width:50px;"></div><div class="c l u" style="left:80px;width:102px;background:#84de2e;">TESTPPS</div><div class="c " style="left:182px;width:50px;">S</div><div class="c " style="left:232px;width:40px;">Fri</div><div class="c " style="left:272px;width:58px;">18 Aug</div><div class="c " style="left:330px;width:51px;">08:00</div><div class="c u" style="left:381px;width:50px;">LOWW</div><div class="c u" style="left:431px;width:50px;">EBBR</div><div class="c " style="left:481px;width:50px;">09:30</div><div class="c u" style="left:531px;width:60px;background:#2dd187;">A319</div><div class="c u" style="left:591px;width:75px;background:#2dd187;">A-BCDE</div><div class="c u" style="left:666px;width:60px;">MAN</div><div class="c " style="left:726px;width:72px;letter-spacing:-.2px">-</div><div class="c u" style="left:798px;width:50px;">-</div><div class="c u" style="left:848px;width:50px;">-</div><div class="c u" style="left:898px;width:50px;">-</div><div class="c u" style="left:948px;width:50px;">-</div><div class="c u" style="left:998px;width:50px;">-</div><div class="c l" style="left:1048px;width:80px;padding-left:5.5px;letter-spacing:.12px">08-2023/34</div><div class="c " style="left:1128px;width:74px;"><span class="em">---</span> / <span class="em">---</span></div><div class="c " style="left:1202px;width:59px;"></div></div><div class="c l t" style="left:1261px;width:255px;"></div></div>
<div class="r" style="top:567px"><div class="rb"><div class="c " style="left:0px;width:30px;background:#ff9999;"><i class="cb"></i></div><div class="c " style="left:30px;width:50px;"></div><div class="c l u" style="left:80px;width:102px;background:#84de2e;">123</div><div class="c " style="left:182px;width:50px;">S</div><div class="c " style="left:232px;width:40px;">Fri</div><div class="c " style="left:272px;width:58px;">18 Aug</div><div class="c " style="left:330px;width:51px;">10:00</div><div class="c u" style="left:381px;width:50px;">VGHS</div><div class="c u" style="left:431px;width:50px;">VGEG</div><div class="c " style="left:481px;width:50px;">10:45</div><div class="c u" style="left:531px;width:60px;"></div><div class="c u" style="left:591px;width:75px;">?</div><div class="c u" style="left:666px;width:60px;">MAN</div><div class="c " style="left:726px;width:72px;letter-spacing:-.2px">AirHeaven Co</div><div class="c u" style="left:798px;width:50px;">-</div><div class="c u" style="left:848px;width:50px;">-</div><div class="c u" style="left:898px;width:50px;">-</div><div class="c u" style="left:948px;width:50px;">-</div><div class="c u" style="left:998px;width:50px;">-</div><div class="c l" style="left:1048px;width:80px;padding-left:5.5px;letter-spacing:.12px">08-2023/188</div><div class="c " style="left:1128px;width:74px;"><span class="em">---</span> / <span class="em">---</span></div><div class="c " style="left:1202px;width:59px;"></div></div><div class="c l t" style="left:1261px;width:255px;"><span class="tag dom">DOMESTIC</span></div></div>
<div class="r" style="top:600px"><div class="rb"><div class="c " style="left:0px;width:30px;background:#ff9999;"><i class="cb"></i></div><div class="c " style="left:30px;width:50px;"></div><div class="c l u" style="left:80px;width:102px;background:#84de2e;">124</div><div class="c " style="left:182px;width:50px;">S</div><div class="c " style="left:232px;width:40px;">Fri</div><div class="c " style="left:272px;width:58px;">18 Aug</div><div class="c " style="left:330px;width:51px;">11:45</div><div class="c u" style="left:381px;width:50px;">VGEG</div><div class="c u" style="left:431px;width:50px;">VGHS</div><div class="c " style="left:481px;width:50px;">12:30</div><div class="c u" style="left:531px;width:60px;"></div><div class="c u" style="left:591px;width:75px;">?</div><div class="c u" style="left:666px;width:60px;">MAN</div><div class="c " style="left:726px;width:72px;letter-spacing:-.2px">AirHeaven Co</div><div class="c u" style="left:798px;width:50px;">-</div><div class="c u" style="left:848px;width:50px;">-</div><div class="c u" style="left:898px;width:50px;">-</div><div class="c u" style="left:948px;width:50px;">-</div><div class="c u" style="left:998px;width:50px;">-</div><div class="c l" style="left:1048px;width:80px;padding-left:5.5px;letter-spacing:.12px">08-2023/188</div><div class="c " style="left:1128px;width:74px;">3 PAX / <span class="em">---</span></div><div class="c " style="left:1202px;width:59px;"></div></div><div class="c l t" style="left:1261px;width:255px;"><span class="tag dom">DOMESTIC</span></div></div>
<div class="r" style="top:633px"><div class="rb"><div class="c " style="left:0px;width:30px;background:#ff9999;"><i class="cb"></i></div><div class="c " style="left:30px;width:50px;"></div><div class="c l u" style="left:80px;width:102px;background:#84de2e;">LO666</div><div class="c " style="left:182px;width:50px;">S</div><div class="c " style="left:232px;width:40px;">Fri</div><div class="c " style="left:272px;width:58px;">18 Aug</div><div class="c " style="left:330px;width:51px;">10:00</div><div class="c u" style="left:381px;width:50px;">EGGW</div><div class="c u" style="left:431px;width:50px;">KVNC</div><div class="c " style="left:481px;width:50px;">12:00</div><div class="c u" style="left:531px;width:60px;background:#eefc2b;">PC12</div><div class="c u" style="left:591px;width:75px;background:#eefc2b;">M-ANTI</div><div class="c u" style="left:666px;width:60px;">MAN</div><div class="c " style="left:726px;width:72px;letter-spacing:-.2px">AirHeaven Co</div><div class="c u" style="left:798px;width:50px;">-</div><div class="c u" style="left:848px;width:50px;">-</div><div class="c u" style="left:898px;width:50px;">-</div><div class="c u" style="left:948px;width:50px;">-</div><div class="c u" style="left:998px;width:50px;">-</div><div class="c l" style="left:1048px;width:80px;padding-left:5.5px;letter-spacing:.12px">08-2023/205</div><div class="c " style="left:1128px;width:74px;"><span class="em">---</span> / <span class="em">---</span></div><div class="c " style="left:1202px;width:59px;"></div></div><div class="c l t" style="left:1261px;width:255px;"><span class="tag red">66666</span></div></div>
<div class="r" style="top:666px"><div class="rb"><div class="c " style="left:0px;width:30px;background:#ff9999;"><i class="cb"></i></div><div class="c " style="left:30px;width:50px;"></div><div class="c l u" style="left:80px;width:102px;background:#84de2e;">LO667</div><div class="c " style="left:182px;width:50px;">S</div><div class="c " style="left:232px;width:40px;">Fri</div><div class="c " style="left:272px;width:58px;">18 Aug</div><div class="c " style="left:330px;width:51px;">14:00</div><div class="c u" style="left:381px;width:50px;">KVNC</div><div class="c u" style="left:431px;width:50px;">EGGW</div><div class="c " style="left:481px;width:50px;">16:00</div><div class="c u" style="left:531px;width:60px;background:#eefc2b;">PC12</div><div class="c u" style="left:591px;width:75px;background:#eefc2b;">M-ANTI</div><div class="c u" style="left:666px;width:60px;">MAN</div><div class="c " style="left:726px;width:72px;letter-spacing:-.2px">AirHeaven Co</div><div class="c u" style="left:798px;width:50px;">-</div><div class="c u" style="left:848px;width:50px;">-</div><div class="c u" style="left:898px;width:50px;">-</div><div class="c u" style="left:948px;width:50px;">-</div><div class="c u" style="left:998px;width:50px;">-</div><div class="c l" style="left:1048px;width:80px;padding-left:5.5px;letter-spacing:.12px">08-2023/205</div><div class="c " style="left:1128px;width:74px;"><span class="em">---</span> / <span class="em">---</span></div><div class="c " style="left:1202px;width:59px;"></div></div><div class="c l t" style="left:1261px;width:255px;"><span class="tag red">66666</span></div></div>
<div class="r s" style="top:699px"><div class="rb"><div class="c " style="left:0px;width:30px;background:#ff9999;"><i class="cb"></i></div><div class="c " style="left:30px;width:50px;"><i class="dot"></i></div><div class="c l u" style="left:80px;width:102px;background:#dedede;">BARTI</div><div class="c " style="left:182px;width:50px;">N</div><div class="c " style="left:232px;width:40px;">Fri</div><div class="c " style="left:272px;width:58px;">18 Aug</div><div class="c " style="left:330px;width:51px;">18:00</div><div class="c u" style="left:381px;width:50px;">LHBP</div><div class="c u" style="left:431px;width:50px;">ZBAA</div><div class="c " style="left:481px;width:50px;">03:35</div><div class="c u" style="left:531px;width:60px;background:#42a5f5;">F900</div><div class="c u" style="left:591px;width:75px;background:#42a5f5;">B-ARTI</div><div class="c u" style="left:666px;width:60px;">MAN</div><div class="c " style="left:726px;width:72px;letter-spacing:-.2px">-</div><div class="c u" style="left:798px;width:50px;">DEL</div><div class="c u" style="left:848px;width:50px;">DEL</div><div class="c u" style="left:898px;width:50px;">-</div><div class="c u" style="left:948px;width:50px;">-</div><div class="c u" style="left:998px;width:50px;">-</div><div class="c l" style="left:1048px;width:80px;padding-left:5.5px;letter-spacing:.12px">08-2023/219</div><div class="c " style="left:1128px;width:74px;">FERRY / <span class="em">---</span></div><div class="c " style="left:1202px;width:59px;"></div></div><div class="c l t" style="left:1261px;width:255px;"></div></div>
<div class="r x" style="top:735px"><div class="rb"><div class="c " style="left:0px;width:30px;"><i class="cb"></i></div><div class="c " style="left:30px;width:50px;"></div><div class="c l u" style="left:80px;width:102px;">ABC001</div><div class="c " style="left:182px;width:50px;">N</div><div class="c " style="left:232px;width:40px;">Sun</div><div class="c " style="left:272px;width:58px;">20 Aug</div><div class="c " style="left:330px;width:51px;">07:00</div><div class="c u" style="left:381px;width:50px;">EDDF</div><div class="c u" style="left:431px;width:50px;">GVAC</div><div class="c " style="left:481px;width:50px;">13:00</div><div class="c u" style="left:531px;width:60px;"></div><div class="c u" style="left:591px;width:75px;">?</div><div class="c u" style="left:666px;width:60px;">MAN</div><div class="c " style="left:726px;width:72px;letter-spacing:-.2px">-</div><div class="c u" style="left:798px;width:50px;">-</div><div class="c u" style="left:848px;width:50px;">-</div><div class="c u" style="left:898px;width:50px;">-</div><div class="c u" style="left:948px;width:50px;">-</div><div class="c u" style="left:998px;width:50px;">-</div><div class="c l" style="left:1048px;width:80px;padding-left:5.5px;letter-spacing:.12px">08-2023/64</div><div class="c " style="left:1128px;width:74px;"><span class="em">---</span> / <span class="em">---</span></div><div class="c " style="left:1202px;width:59px;"></div></div><div class="c l t" style="left:1261px;width:255px;"></div></div>
<div class="r" style="top:768px"><div class="rb"><div class="c " style="left:0px;width:30px;background:#ff9999;"><i class="cb"></i></div><div class="c " style="left:30px;width:50px;"></div><div class="c l u" style="left:80px;width:102px;background:#84de2e;">LO666</div><div class="c " style="left:182px;width:50px;">S</div><div class="c " style="left:232px;width:40px;">Sun</div><div class="c " style="left:272px;width:58px;">20 Aug</div><div class="c " style="left:330px;width:51px;">10:00</div><div class="c u" style="left:381px;width:50px;">EGGW</div><div class="c u" style="left:431px;width:50px;">KVNC</div><div class="c " style="left:481px;width:50px;">12:00</div><div class="c u" style="left:531px;width:60px;background:#eefc2b;">PC12</div><div class="c u" style="left:591px;width:75px;background:#eefc2b;">M-ANTI</div><div class="c u" style="left:666px;width:60px;">MAN</div><div class="c " style="left:726px;width:72px;letter-spacing:-.2px">AirHeaven Co</div><div class="c u" style="left:798px;width:50px;">KOWA</div><div class="c u" style="left:848px;width:50px;">KOWA</div><div class="c u" style="left:898px;width:50px;">-</div><div class="c u" style="left:948px;width:50px;">-</div><div class="c u" style="left:998px;width:50px;">-</div><div class="c l" style="left:1048px;width:80px;padding-left:5.5px;letter-spacing:.12px">08-2023/200</div><div class="c " style="left:1128px;width:74px;"><span class="em">---</span> / <span class="em">---</span></div><div class="c " style="left:1202px;width:59px;"></div></div><div class="c l t" style="left:1261px;width:255px;"><span class="tag red">66666</span></div></div>
</div>
<div id="sb">
  <svg width="8" height="4" viewBox="0 0 8 4" style="position:absolute;left:3.500px;top:6px"><path d="M0 4L4 0 8 4z" fill="#a3a3a3"/></svg>
  <div class="thumb"></div>
  <svg width="8" height="4" viewBox="0 0 8 4" style="position:absolute;left:3.500px;top:776px"><path d="M0 0L4 4 8 0z" fill="#505050"/></svg>
</div>

<!-- FOOTER -->
<div id="ft">
  <div class="btn" style="left:8px;width:76px"><b>NEW TRIP</b></div>
  <div class="btn" style="left:92px;width:124px"><b>NEW POSITIONING</b></div>
  <div class="btn" style="left:224px;width:128px"><b>NEW RESERVATION</b></div>
  <div class="btn" style="left:360px;width:116px"><b>NEW SIMULATOR</b></div>
  <div class="btn w" style="left:484px;width:130px"><b>SERVICE REQUESTS</b></div>
  <div class="btn w" style="left:1483px;width:33px">
    <svg width="9" height="7" viewBox="0 0 9 7" style="position:absolute;left:11px;top:9px"><path d="M0 .5h9M0 3.500h9M0 6.500h9" stroke="#222" stroke-width="1.200"/></svg>
  </div>
</div>

<!-- TOOLTIP -->
<div id="tip">
  <div class="arrow"></div>
  <div style="position:absolute;left:12px;top:34px;width:316px;height:28px;background:#ffe680"></div>
  <div class="t" style="left:15px;top:36px;font-weight:bold;color:#222">Cautions:</div>
  <div class="t" style="left:15px;top:47px">Rotation time too short. Please check surrounding flights</div>
  <div class="t" style="left:15px;top:84px;font-weight:bold;color:#222">HiLs:</div>

  <div class="t" style="left:19px;top:96px;font-size:13px;left:17px">&#8226;</div>
  <div class="t" style="left:30px;top:95px;font-weight:bold;font-size:11.500px;color:#222;transform:scaleX(.9);transform-origin:0 50%">RRR</div>
  <div class="t" style="left:30px;top:111px;font-style:italic;transform:scaleX(.965);transform-origin:0 50%">Opened: 09-04-2023, Due date: 24-04-2023,</div>
  <div class="t" style="left:30px;top:122px;font-style:italic;transform:scaleX(.965);transform-origin:0 50%">Extended date: <b>30-04-2023</b></div>
  <div class="t" style="left:30px;top:137px;font-style:italic;transform:scaleX(.965);transform-origin:0 50%">HIL: <b>123</b>, MEL: <b>12312</b></div>

  <div class="t" style="left:19px;top:159px;font-size:13px;left:17px">&#8226;</div>
  <div class="t" style="left:30px;top:158px;font-weight:bold;font-size:11.500px;color:#222;transform:scaleX(.9);transform-origin:0 50%">weqw</div>
  <div class="t" style="left:30px;top:174px;font-style:italic;transform:scaleX(.965);transform-origin:0 50%">Opened: 01-05-2023, Due date: 07-05-2023,</div>
  <div class="t" style="left:30px;top:185px;font-style:italic;transform:scaleX(.965);transform-origin:0 50%">Extended date: <b>N/A</b></div>
  <div class="t" style="left:30px;top:200px;font-style:italic;transform:scaleX(.965);transform-origin:0 50%">HIL: <b>66261</b>, MEL: <b>66261</b></div>

  <div class="tr a" style="top:226px;height:27px"><div class="tl">PHONE</div><div class="tv" style="letter-spacing:.4px;left:114.500px">111111222222</div></div>
  <div class="tr" style="top:253px;height:41px"><div class="tl">RESCUE &amp; FIRE<br>CATEGORY</div><div class="tv">3</div></div>
  <div class="tr a" style="top:294px;height:41px"><div class="tl">RESCUE &amp; FIRE<br>CATEGORY FAA</div><div class="tv">C</div></div>
  <div class="tr" style="top:335px;height:27px"><div class="tl">PAX CAPACITY</div><div class="tv">1</div></div>
  <div class="tr a" style="top:362px;height:27px"><div class="tl">MTOW</div><div class="tv">130000 lbs</div></div>
  <div class="tr" style="top:389px;height:27px"><div class="tl">WIFI</div><div class="tv">No</div></div>

  <div class="t" style="left:227px;top:444px;font-size:9px;color:#4a5870;transform:scaleX(.9);transform-origin:0 50%">COPY TO CLIPBOARD</div>
  <svg width="11" height="11" viewBox="0 0 11 11" style="position:absolute;left:318px;top:445px"><path fill="#36527c" d="M0 1.500h1.200V.3h1.300v1.200h1.300V.3h1.300v1.200h1.300V.3h1.300v1.200h1.300V.3H10.300v1.200H11V11H0z"/><path d="M2.300 4.500h6.400M2.300 6.500h6.400M2.300 8.500h6.400" stroke="#fff5d1" stroke-width="1"/></svg>
</div>

</body>
</html>
